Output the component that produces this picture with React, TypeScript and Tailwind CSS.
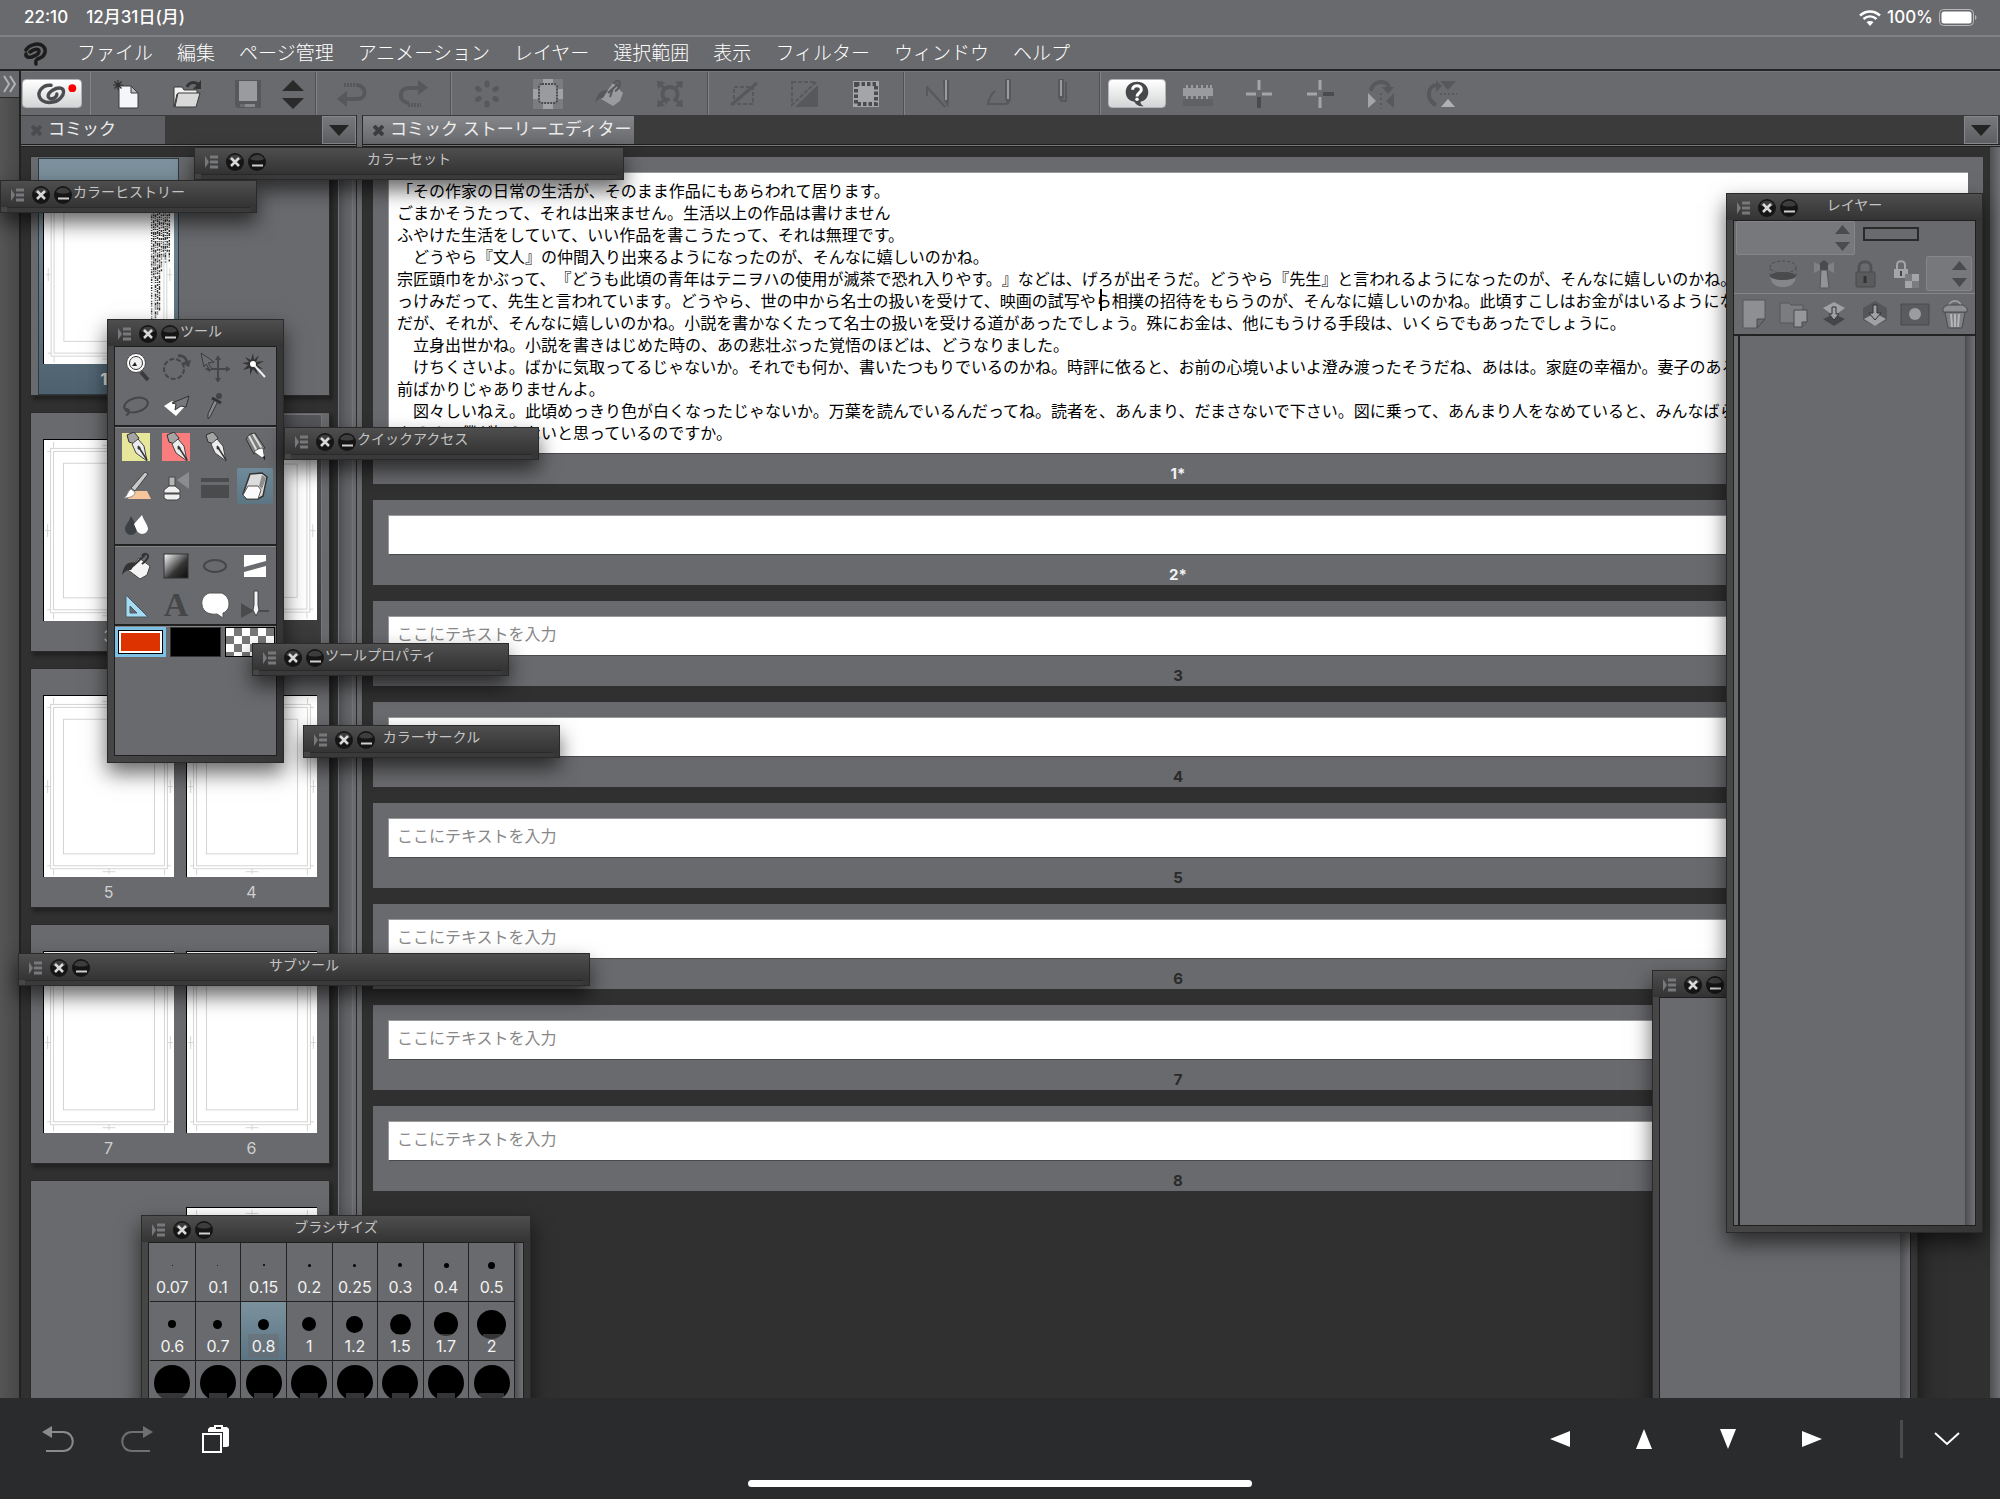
import type { ReactNode } from "react"
import clsx from "clsx"

const MENU = ["ファイル", "編集", "ページ管理", "アニメーション", "レイヤー", "選択範囲", "表示", "フィルター", "ウィンドウ", "ヘルプ"]

const STORY = [
  "「その作家の日常の生活が、そのまま作品にもあらわれて居ります。",
  "ごまかそうたって、それは出来ません。生活以上の作品は書けません",
  "ふやけた生活をしていて、いい作品を書こうたって、それは無理です。",
  "　どうやら『文人』の仲間入り出来るようになったのが、そんなに嬉しいのかね。",
  "宗匠頭巾をかぶって、『どうも此頃の青年はテニヲハの使用が滅茶で恐れ入りやす。』などは、げろが出そうだ。どうやら『先生』と言われるようになったのが、そんなに嬉しいのかね。は",
  "っけみだって、先生と言われています。どうやら、世の中から名士の扱いを受けて、映画の試写やら相撲の招待をもらうのが、そんなに嬉しいのかね。此頃すこしはお金がはいるようになっ",
  "だが、それが、そんなに嬉しいのかね。小説を書かなくたって名士の扱いを受ける道があったでしょう。殊にお金は、他にもうける手段は、いくらでもあったでしょうに。",
  "　立身出世かね。小説を書きはじめた時の、あの悲壮ぶった覚悟のほどは、どうなりました。",
  "　けちくさいよ。ばかに気取ってるじゃないか。それでも何か、書いたつもりでいるのかね。時評に依ると、お前の心境いよいよ澄み渡ったそうだね、あはは。家庭の幸福か。妻子のあるのは",
  "前ばかりじゃありませんよ。",
  "　図々しいねえ。此頃めっきり色が白くなったじゃないか。万葉を読んでいるんだってね。読者を、あんまり、だまさないで下さい。図に乗って、あんまり人をなめていると、みんなばらして",
  "やるぞ。僕が知らないと思っているのですか。",
].join("\n")

const DARK = "#4a4b4d"
const MID = "#57585b"
const PALE = "#9a9b9e"

function Icon({ size = 30, children }: { size?: number; children: ReactNode }) {
  return (
    <svg width={size} height={size} viewBox="0 0 30 30" fill="none" className="shrink-0" aria-hidden="true">
      {children}
    </svg>
  )
}

/* ---------- command bar ---------- */

const icons = {
  newFile: (
    <Icon>
      <path d="M8 7h12l7 7v15H8z" fill="#f4f6f8" stroke="#3a3a3a" />
      <path d="M20 7v7h7z" fill="#b9bcc0" stroke="#3a3a3a" />
      <path d="M7 1v10M2 6h10M3.500 2.500l7 7M10.500 2.500l-7 7" stroke="#2e2e2e" strokeWidth="1.200" />
    </Icon>
  ),
  open: (
    <Icon>
      <path d="M2 8h8l2 3h13v4H5L2 28z" fill="#f2f2f2" stroke="#3a3a3a" />
      <path d="M6 14h22l-4 14H3z" fill="#d9d9d9" stroke="#3a3a3a" />
      <path d="M15 8c2-5 8-6 12-2" stroke="#333" strokeWidth="3" />
      <path d="M29 1v9h-8z" fill="#333" />
    </Icon>
  ),
  save: (
    <Icon>
      <path d="M2 1h26v28H4l-2-2z" fill={MID} />
      <path d="M6 2h18v20H6z" fill={PALE} />
      <path d="M7 25h15v3H7z" fill="#88898c" />
      <path d="M7 25h5v3H7z" fill="#6a6b6e" />
    </Icon>
  ),
  spin: (
    <Icon>
      <path d="M15 1l11 11H4zM15 30l11-11H4z" fill="#2a2a2a" />
    </Icon>
  ),
  undo: (
    <Icon>
      <path d="M7 6h13" stroke={MID} strokeWidth="4" strokeDasharray="2 1" />
      <path d="M20 6c10 1 10 14 0 14H8" stroke={MID} strokeWidth="4" />
      <path d="M10 12v16L0 20z" fill={MID} />
    </Icon>
  ),
  redo: (
    <Icon>
      <path d="M10 26h13" stroke={MID} strokeWidth="4" strokeDasharray="2 1" />
      <path d="M11 24C0 23 0 9 11 9h9" stroke={MID} strokeWidth="4" />
      <path d="M20 1v15l10-7.500z" fill={MID} />
    </Icon>
  ),
  burst: (
    <Icon>
      {[0, 60, 120, 180, 240, 300].map((a) => (
        <ellipse key={a} cx="15" cy="5" rx="2.600" ry="3.500" fill={MID} transform={`rotate(${a} 15 15)`} />
      ))}
    </Icon>
  ),
  cross: (
    <Icon>
      <path d="M0 0h30v30H0z" fill="#7b7c7f" />
      <path d="M10 0h10v30H10zM0 10h30v10H0z" fill="#a1a2a5" />
      <rect x="6" y="5" width="18" height="19" rx="3" fill={PALE} stroke="#4a4b4d" strokeWidth="2" strokeDasharray="2 1" />
    </Icon>
  ),
  fill: (
    <Icon>
      <path d="M19 4l10 10-3 8-7 5L7 20z" fill={PALE} />
      <path d="M14 11C6 11 3 15 1 24c3-4 5-5 8-5z" fill={MID} />
      <path d="M14 14l10-9M20 5c0-4 6-4 6-1s-2 7-5 8M16 18l3-9" stroke={MID} strokeWidth="2" />
    </Icon>
  ),
  expand: (
    <Icon>
      <path d="M2 2l8 1-7 7zM28 2l-8 1 7 7zM2 28l8-1-7-7zM28 28l-8-1 7-7z" fill={MID} />
      <path d="M4 4l6 6M26 4l-6 6M4 26l5-5M26 26l-5-5" stroke={MID} strokeWidth="3" />
      <path d="M11 22c-6-5-4-14 4-14s10 9 4 14" stroke={MID} strokeWidth="4" />
      <path d="M11 18l5 2-6 6z" fill={MID} />
    </Icon>
  ),
  deselect: (
    <Icon>
      <rect x="5" y="8" width="19" height="17" stroke={MID} strokeWidth="2" strokeDasharray="4 2" />
      <path d="M2 26L28 4" stroke={MID} strokeWidth="3" />
    </Icon>
  ),
  invert: (
    <Icon>
      <path d="M2 3h24L2 26z" stroke={MID} strokeWidth="2" strokeDasharray="4 2" />
      <path d="M28 6v22H5z" fill={MID} />
    </Icon>
  ),
  border: (
    <Icon>
      <path d="M2 2h26v26H2z" fill="#a4a5a8" />
      <rect x="5" y="5" width="20" height="20" stroke="#4a4b4d" strokeWidth="4" strokeDasharray="3.500 2" />
    </Icon>
  ),
  rulerSnap: (
    <Icon>
      <path d="M2 7v10M2 8l18 20" stroke={MID} strokeWidth="2" />
      <path d="M18 1h6v20l-1 8-4-8z" fill={MID} />
      <path d="M20 1h2v20h-2z" fill={PALE} />
    </Icon>
  ),
  curveSnap: (
    <Icon>
      <path d="M9 12C4 16 3 20 2 25h18l4-3" stroke={MID} strokeWidth="2" />
      <path d="M19 0h6v20l-3 6-3-6z" fill={MID} />
      <path d="M21 1h2v19h-2z" fill={PALE} />
    </Icon>
  ),
  gridSnap: (
    <Icon>
      <path d="M11 0h6v18l-3 6-3-6z" fill={MID} />
      <path d="M13 1h2v16h-2z" fill={PALE} />
      <path d="M19 3v19h-6" stroke={MID} strokeWidth="2" />
    </Icon>
  ),
  ruler: (
    <Icon>
      <path d="M0 9h30v8H0z" fill={PALE} />
      <path d="M4 6v5M9 6v5M14 6v5M19 6v5M24 6v5M28 6v5M4 15v5M9 15v5M14 15v5M19 15v5M24 15v5" stroke={PALE} strokeWidth="2" />
      <path d="M0 20h30v7H0z" fill="#606164" />
    </Icon>
  ),
  crossA: (
    <Icon>
      <path d="M15 1v10M2 15h10M18 15h10" stroke="#a4a5a8" strokeWidth="3" />
      <path d="M15 18v11" stroke={DARK} strokeWidth="4" />
    </Icon>
  ),
  crossB: (
    <Icon>
      <path d="M15 1v10M15 18v11M2 15h10" stroke="#a4a5a8" strokeWidth="3" />
      <path d="M18 15h11" stroke={DARK} strokeWidth="4" />
    </Icon>
  ),
  flipH: (
    <Icon>
      <path d="M5 12C6 1 22 0 23 9" stroke={MID} strokeWidth="4" />
      <path d="M16 8h12l-6 7z" fill={MID} />
      <path d="M15 14v16" stroke={MID} strokeWidth="2" strokeDasharray="2 3" />
      <path d="M2 14v15l8-7z" fill="#a4a5a8" />
      <path d="M28 14v15l-8-7z" fill={MID} />
    </Icon>
  ),
  flipV: (
    <Icon>
      <path d="M9 26C-2 20 1 6 10 6" stroke={MID} strokeWidth="4" />
      <path d="M9 1v12l6-6z" fill={MID} />
      <path d="M13 15h17" stroke={MID} strokeWidth="2" strokeDasharray="2 2" />
      <path d="M13 2h16l-8 9z" fill={MID} />
      <path d="M14 28h14l-7-8z" fill="#b0b1b4" />
    </Icon>
  ),
}

function BarGroup({ children }: { children: ReactNode }) {
  return <div className="flex h-full items-center border-r border-[#828386] pr-2 pl-1 shadow-[-1px_0_0_#505153_inset]">{children}</div>
}

function BarButton({ label, children }: { label: string; children: ReactNode }) {
  return (
    <button aria-label={label} className="flex h-9 w-[61px] items-center justify-center">
      {children}
    </button>
  )
}

function CommandBar() {
  return (
    <div className="flex h-11 shrink-0 items-center border-t border-[#75767a] bg-[#696a6d]">
      <div className="flex h-full w-[70px] items-center border-r border-[#828386] pl-px">
        <button aria-label="CLIP STUDIO" className="flex h-[29px] w-[60px] items-center justify-center rounded-sm border border-[#b4b4b4] bg-linear-to-b from-white to-[#d4d5d6]">
          <svg width="60" height="28" viewBox="0 0 60 28" fill="none" aria-hidden="true">
            <path
              d="M29 5c-9-1-14 7-12 12 3 8 17 7 22 1 4-4 4-9 0-10-5-1-13 4-13 8 0 5 9 3 9-2"
              stroke="#4c4d51"
              strokeWidth="3.500"
              strokeLinecap="round"
            />
            <circle cx="51" cy="8" r="4" fill="#f00" />
          </svg>
        </button>
      </div>
      <BarGroup>
        <BarButton label="新規">{icons.newFile}</BarButton>
        <BarButton label="開く">{icons.open}</BarButton>
        <BarButton label="保存">{icons.save}</BarButton>
        <button aria-label="前後のページ" className="flex w-[30px] justify-center">{icons.spin}</button>
      </BarGroup>
      <BarGroup>
        <BarButton label="取り消し">{icons.undo}</BarButton>
        <BarButton label="やり直し">{icons.redo}</BarButton>
      </BarGroup>
      <BarGroup>
        <BarButton label="消去">{icons.burst}</BarButton>
        <BarButton label="選択範囲外を消去">{icons.cross}</BarButton>
        <BarButton label="塗りつぶし">{icons.fill}</BarButton>
        <BarButton label="拡大・縮小・回転">{icons.expand}</BarButton>
      </BarGroup>
      <BarGroup>
        <BarButton label="選択を解除">{icons.deselect}</BarButton>
        <BarButton label="選択範囲を反転">{icons.invert}</BarButton>
        <BarButton label="選択範囲の境界線">{icons.border}</BarButton>
      </BarGroup>
      <BarGroup>
        <BarButton label="定規にスナップ">{icons.rulerSnap}</BarButton>
        <BarButton label="特殊定規にスナップ">{icons.curveSnap}</BarButton>
        <BarButton label="グリッドにスナップ">{icons.gridSnap}</BarButton>
      </BarGroup>
      <div className="flex h-full items-center pl-[5px]">
        <BarButton label="サポート">
          <span className="flex h-[29px] w-[58px] items-center justify-center rounded-sm border border-[#b4b4b4] bg-linear-to-b from-white to-[#d4d5d6]">
            <Icon size={26}>
              <path d="M15 1c8 0 13 5 13 12 0 6-4 10-9 11 0 2 1 4 4 5-5 1-9-1-11-5C6 23 2 19 2 13 2 6 7 1 15 1z" fill="#47484b" />
              <path d="M10 10c0-6 10-6 10 0 0 3-5 4-5 8" stroke="#fff" strokeWidth="3.500" />
              <circle cx="15" cy="21" r="2" fill="#fff" />
            </Icon>
          </span>
        </BarButton>
        <BarButton label="ルーラー">{icons.ruler}</BarButton>
        <BarButton label="トンボ">{icons.crossA}</BarButton>
        <BarButton label="基本枠">{icons.crossB}</BarButton>
        <BarButton label="左右反転">{icons.flipH}</BarButton>
        <BarButton label="上下反転">{icons.flipV}</BarButton>
      </div>
    </div>
  )
}

/* ---------- page list ---------- */

function Guides() {
  return (
    <svg viewBox="0 0 131 183" className="absolute inset-0 h-full w-full" fill="none" stroke="#d4d4d4" aria-hidden="true">
      <rect x="6.500" y="8.500" width="118" height="166" />
      <rect x="9.500" y="11.500" width="112" height="160" />
      <rect x="19.500" y="23.500" width="92" height="136" />
      <path d="M9.500 2v6M121.500 2v6M9.500 175v6M121.500 175v6M3 11.500h4M3 171.500h4M124 11.500h4M124 171.500h4" />
      <path d="M59 177.500h13M65.500 174v6M59 5.500h13M65.500 2v6M1 91.500h5M3.500 85v13M125 91.500h5M127.500 85v13" />
    </svg>
  )
}

// vertical columns of tiny handwriting: x, bottom end, dash rhythm
const COLUMNS: [number, number, string][] = [
  [109, 150, "2 1 1 2 1 1"],
  [111, 96, "1 2 3 1 1 1 2 1"],
  [113, 158, "3 1 1 1 1 2"],
  [115, 132, "1 1 2 2 1 1 3 1"],
  [117, 128, "2 1 1 1 4 2"],
  [119, 88, "1 1 1 2 2 1"],
  [121, 74, "2 2 1 1 1 1 3 1"],
  [123, 80, "1 1 3 1 1 2"],
  [125, 68, "2 1 1 1 2 2"],
  [127, 78, "1 2 2 1 3 1"],
]

function Manuscript() {
  return (
    <svg viewBox="0 0 131 183" className="absolute inset-0 h-full w-full" fill="none" stroke="#333" aria-hidden="true">
      {COLUMNS.map(([x, end, dash], i) => (
        <path key={x} d={`M${x} 0V${end}`} strokeDasharray={dash} strokeDashoffset={i * 3} strokeWidth="1.500" />
      ))}
    </svg>
  )
}

function Page({ no, state }: { no?: string; state?: "selected" | "current" }) {
  if (!no) return <div className="w-[141px]" />
  return (
    <div
      className={clsx(
        "flex w-[141px] flex-col items-center pt-[25px]",
        state === "selected" && "border border-[#2f3a40] bg-linear-to-b from-[#7d929e] to-[#4d616e]",
        state === "current" && "border border-[#77787b] bg-linear-to-b from-[#55565a] to-[#393939]",
      )}
    >
      <div className="relative h-[183px] w-[131px] border-t border-l border-black bg-white">
        <Guides />
        {state === "selected" && <Manuscript />}
      </div>
      <span className={clsx("flex h-[30px] items-center text-base", state === "selected" ? "font-bold text-[#e4e4e4]" : "text-[#cfcfcf]")}>{no}</span>
    </div>
  )
}

function Spread({ children }: { children: ReactNode }) {
  return (
    <div className="flex h-60 shrink-0 gap-0.5 border border-[#2a2a2a] bg-[#696a6d] px-[7px] pt-px shadow-[3px_4px_3px_#222]">
      {children}
    </div>
  )
}

function ScrollTrack() {
  return <div className="w-[15px] shrink-0 border-x border-[#747578] bg-linear-to-r from-[#4f5053] via-[#5e5f62] to-[#66676a]" />
}

function DownButton({ label }: { label: string }) {
  return (
    <button aria-label={label} className="flex h-7 w-[34px] items-center justify-center border border-[#86878a] bg-linear-to-b from-[#77787b] to-[#5e5f62]">
      <svg width="20" height="11" viewBox="0 0 20 11" aria-hidden="true">
        <path d="M0 0h20L10 11z" fill="#242424" />
      </svg>
    </button>
  )
}

function Tab({ active, className, children }: { active?: boolean; className?: string; children: ReactNode }) {
  return (
    <button
      className={clsx(
        "flex h-7 items-center gap-1.5 whitespace-nowrap pr-0.5 pl-2.5 text-[17px] text-[#ececec]",
        active ? "bg-linear-to-b from-[#85868a] to-[#696a6d]" : "bg-[#5f6063]",
        className,
      )}
    >
      <svg width="11" height="11" viewBox="0 0 11 11" stroke={active ? "#3c3d3f" : "#4b4c4e"} strokeWidth="4" aria-hidden="true">
        <path d="M1 1l9 9M10 1l-9 9" />
      </svg>
      {children}
    </button>
  )
}

function PageList() {
  return (
    <section className="flex w-[335px] shrink-0 flex-col">
      <div className="flex h-[29px] shrink-0 items-end justify-between bg-[#3b3b3b]">
        <Tab className="w-36">コミック</Tab>
        <DownButton label="タブ一覧" />
      </div>
      <div className="h-[3px] shrink-0 border-y border-[#1e1e1e] bg-[#77787b]" />
      <div className="flex min-h-0 flex-1 bg-[#303030]">
        <div className="flex min-h-0 flex-1 flex-col gap-4 overflow-hidden pt-[9px] pr-2 pl-[9px]">
          <Spread>
            <Page no="1*" state="selected" />
            <Page />
          </Spread>
          <Spread>
            <Page no="3" />
            <Page no="2" state="current" />
          </Spread>
          <Spread>
            <Page no="5" />
            <Page no="4" />
          </Spread>
          <Spread>
            <Page no="7" />
            <Page no="6" />
          </Spread>
          <Spread>
            <Page />
            <Page no="8" />
          </Spread>
        </div>
        <ScrollTrack />
        <div className="w-[3px] bg-[#6a6b6e]" />
      </div>
    </section>
  )
}

/* ---------- story editor ---------- */

function StoryPage({ no, bright, placeholder }: { no: string; bright?: boolean; placeholder?: string }) {
  return (
    <label className="flex shrink-0 flex-col bg-[#696a6d] px-[15px] pt-[15px]">
      <input
        placeholder={placeholder}
        className="h-10 border-t border-b border-l border-t-[#9a9a9a] border-b-[#4a4a4a] border-l-[#9a9a9a] bg-white px-2 pb-1 text-base text-black placeholder:text-[#878787]"
      />
      <span className={clsx("flex h-[30px] items-center justify-center pt-2.5 text-[15px] font-bold", bright ? "text-[#f2f2f2]" : "text-[#2a2a2a]")}>
        {no}
      </span>
    </label>
  )
}

function StoryEditor() {
  return (
    <section className="flex min-w-0 flex-1 flex-col">
      <div className="flex h-[29px] shrink-0 items-end justify-between bg-[#3b3b3b] pr-0.5">
        <Tab active>コミック ストーリーエディター</Tab>
        <DownButton label="タブ一覧" />
      </div>
      <div className="h-[3px] shrink-0 border-y border-[#1e1e1e] bg-[#77787b]" />
      <div className="flex min-h-0 flex-1 bg-[#303030]">
        <div className="flex min-w-0 flex-1 flex-col gap-4 overflow-hidden pt-2.5 pr-[7px] pl-2.5">
          <label className="flex shrink-0 flex-col bg-[#696a6d] px-[15px] pt-[15px]">
            <span className="relative flex flex-col">
              <textarea
                wrap="off"
                defaultValue={STORY}
                className="h-[282px] resize-none overflow-hidden border-t border-b border-l border-t-[#9a9a9a] border-b-[#4a4a4a] border-l-[#9a9a9a] bg-white px-2 pt-[7px] text-base leading-[22px] text-black [text-spacing-trim:space-all]"
              />
              <span className="absolute top-[117px] left-[712px] h-[22px] w-0.5 bg-black" />
            </span>
            <span className="flex h-[30px] items-center justify-center pt-2.5 text-[15px] font-bold text-[#f2f2f2]">1*</span>
          </label>
          <StoryPage no="2*" bright />
          <StoryPage no="3" placeholder="ここにテキストを入力" />
          <StoryPage no="4" placeholder="ここにテキストを入力" />
          <StoryPage no="5" placeholder="ここにテキストを入力" />
          <StoryPage no="6" placeholder="ここにテキストを入力" />
          <StoryPage no="7" placeholder="ここにテキストを入力" />
          <StoryPage no="8" placeholder="ここにテキストを入力" />
        </div>
        <div className="w-2.5 shrink-0 bg-linear-to-r from-[#4f5053] to-[#6f7073]" />
      </div>
    </section>
  )
}

/* ---------- floating palettes ---------- */

function Palette({ title, place, children }: { title?: string; place: string; children?: ReactNode }) {
  return (
    <section className={clsx("absolute flex flex-col border border-[#2a2a2a] bg-linear-to-r from-[#464646] to-[#363636] shadow-[0_10px_20px_rgba(0,0,0,0.6)]", place)}>
      <header className="flex h-[26px] shrink-0 items-center bg-linear-to-b from-[#4e4e4e] to-[#343434]">
        <div className="flex w-[72px] shrink-0 items-center gap-1 pt-0.5 pl-2.5">
          <button aria-label="パレットメニュー" className="mr-1">
            <svg width="13" height="14" viewBox="0 0 13 14" aria-hidden="true">
              <path d="M0 1l4 6-4 6z" fill="#77787b" />
              <path d="M5 2h8M5 7h8M5 12h8" stroke="#77787b" strokeWidth="3" />
            </svg>
          </button>
          <button aria-label="閉じる">
            <svg width="18" height="18" viewBox="0 0 18 18" aria-hidden="true">
              <circle cx="9" cy="9" r="9" fill="#151515" />
              <path d="M2 6a8 8 0 0114 0c-4 2-10 2-14 0z" fill="#3d3d3d" />
              <path d="M5 5l8 8M13 5l-8 8" stroke="#d8d8d8" strokeWidth="2.500" />
            </svg>
          </button>
          <button aria-label="最小化">
            <svg width="18" height="18" viewBox="0 0 18 18" aria-hidden="true">
              <circle cx="9" cy="9" r="9" fill="#151515" />
              <path d="M2 6a8 8 0 0114 0c-4 2-10 2-14 0z" fill="#3d3d3d" />
              <path d="M4 12.500h11" stroke="#d0d0d0" strokeWidth="2" />
            </svg>
          </button>
        </div>
        <h2 className="min-w-0 flex-1 pr-[72px] pb-1 text-center text-sm font-normal whitespace-nowrap text-[#c4c4c4]">{title}</h2>
      </header>
      {children ? (
        <div className="mx-1.5 mb-1.5 flex min-h-0 flex-1 flex-col border border-[#1f1f1f] bg-[#696a6d]">{children}</div>
      ) : (
        <div className="mx-1.5 h-[5px] shrink-0 border-t border-[#2a2a2a] bg-[#3a3a3a]" />
      )}
    </section>
  )
}

const penNib = (
  <>
    <path d="M6 3l7-3 5 6-4 6-6-2z" fill="#a4a4a4" stroke="#333" />
    <path d="M11 12l6-5 6 7 3 15-11-8z" fill="#ececec" stroke="#444" />
    <path d="M17 14l9 14" stroke="#333" strokeWidth="1.500" />
    <circle cx="18" cy="16" r="1.500" fill="#333" />
  </>
)

const tools: { label: string; art: ReactNode; on?: boolean }[][] = [
  [
    {
      label: "虫めがね",
      art: (
        <>
          <path d="M20 20l7 8" stroke="#3b3b3b" strokeWidth="4" />
          <circle cx="15" cy="11" r="9.500" fill="#fff" stroke="#444" />
          <circle cx="15" cy="11" r="6.500" fill="#f0f0f0" stroke="#333" />
          <path d="M11 14h5l-2-4z" fill="#222" />
        </>
      ),
    },
    {
      label: "回転",
      art: (
        <>
          <circle cx="13" cy="17" r="10" stroke="#454648" strokeWidth="2" strokeDasharray="5 2" />
          <path d="M17 4c5-1 8 2 9 6" stroke="#454648" strokeWidth="3" />
          <path d="M20 11l10-3-2 7z" fill="#454648" />
        </>
      ),
    },
    {
      label: "移動",
      art: (
        <>
          <path d="M18 6v22M7 17h22" stroke="#454648" strokeWidth="2" />
          <path d="M18 3l3 5h-6zM18 31l3-5h-6zM31 17l-5 3v-6zM5 17l5 3v-6z" fill="#454648" />
          <path d="M1 1l13 9-6 1 4 6-2 1-4-6-2 3z" fill="#6c6d70" stroke="#3d3e40" />
        </>
      ),
    },
    {
      label: "自動選択",
      art: (
        <>
          <path d="M13 1l1 7 5-5-3 7 8-1-7 4 6 4-7-1 2 7-5-6-3 6v-7l-7 2 5-5-6-2 7-1-4-5 6 3z" fill="#333" />
          <path d="M13 12l12 13" stroke="#eee" strokeWidth="2" />
          <circle cx="13" cy="12" r="3" fill="#fff" />
        </>
      ),
    },
    {
      label: "選択範囲",
      art: (
        <>
          <ellipse cx="15" cy="14" rx="12" ry="7" stroke="#454648" strokeWidth="2" transform="rotate(-14 15 14)" />
          <path d="M5 18c4 0 4 5 0 6" stroke="#454648" strokeWidth="2" />
        </>
      ),
    },
    {
      label: "レイヤー移動",
      art: (
        <>
          <path d="M3 15l8-5 7 4 8-1-11 12z" fill="#fff" />
          <path d="M28 5l-3 11-5-1-6 4 1-6-4-1z" fill="#77787b" stroke="#333" />
        </>
      ),
    },
    {
      label: "スポイト",
      art: (
        <>
          <path d="M18 10l-8 16-2 2v-5l7-15z" fill="#8b8c8e" stroke="#333" />
          <path d="M12 7l9 5" stroke="#333" strokeWidth="3" />
          <circle cx="19" cy="5" r="3" fill="#444" />
        </>
      ),
    },
  ],
  [
    { label: "ペン 黄", art: <><path d="M1 1h28v28H1z" fill="#e6e79b" />{penNib}</> },
    { label: "ペン 赤", art: <><path d="M1 1h28v28H1z" fill="#fb7c7c" />{penNib}</> },
    { label: "ペン", art: penNib },
    {
      label: "鉛筆",
      art: (
        <>
          <path d="M6 7l4-5 5-1 10 15-11 6z" fill="#7d7d7d" stroke="#333" />
          <path d="M9 4l8 15M13 2l9 15" stroke="#ddd" strokeWidth="2" />
          <path d="M14 20c3-3 6-4 9-4l2 12z" fill="#fff" stroke="#555" />
          <path d="M22 25l3-1v4z" fill="#222" />
        </>
      ),
    },
    {
      label: "筆",
      art: (
        <>
          <path d="M10 20h16l4 8H7z" fill="#f7c59c" />
          <path d="M24 1l3 2-13 17-4-3z" fill="#c9c9c9" stroke="#444" />
          <path d="M10 18l4 3c0 4-5 6-11 6 4-2 3-7 7-9z" fill="#fff" stroke="#888" />
        </>
      ),
    },
    {
      label: "エアブラシ",
      art: (
        <>
          <path d="M8 6h6v9H8z" fill="#b5b5b5" stroke="#444" />
          <path d="M3 19l5-4h6l5 4v3H3zM3 23h16v4l-3 2H6l-3-2z" fill="#f0f0f0" stroke="#444" />
          <path d="M16 9l12-8v17z" fill="#8b8c8f" />
        </>
      ),
    },
    { label: "デコレーション", art: <path d="M1 7h28v4H1zM1 14h28v13H1z" fill="#4a4b4c" /> },
    {
      label: "消しゴム",
      on: true,
      art: (
        <>
          <path d="M10 3l12-1 5 4-4 19-5 3H7l-4-5z" fill="#dcdcdc" stroke="#333" strokeWidth="1.500" />
          <path d="M8 15h10l3 4-3 9H7l-4-4z" fill="#fbfbfb" stroke="#555" />
          <path d="M22 4l4 3-4 11-3-3z" fill="#8d8d8d" />
        </>
      ),
    },
    {
      label: "色混ぜ",
      art: (
        <>
          <path d="M10 6c3 6 6 9 6 13a6 6 0 01-12 0c0-4 4-7 6-13z" fill="#3c4145" />
          <path d="M13 14l8-9c2 6 6 10 6 14a6 6 0 01-11 2z" fill="#fff" />
        </>
      ),
    },
  ],
  [
    {
      label: "塗りつぶし",
      art: (
        <>
          <path d="M18 7l11 8-3 9-7 4L7 19z" fill="#f4f4f4" stroke="#444" />
          <path d="M15 12C6 10 3 14 1 24c3-4 5-5 9-5z" fill="#333" />
          <path d="M12 15l12-11M21 5c2-4 7-2 6 1-1 4-4 5-6 7" stroke="#333" strokeWidth="2" />
        </>
      ),
    },
    {
      label: "グラデーション",
      art: (
        <>
          <defs>
            <linearGradient id="grad" x1="0" y1="0" x2="1" y2="1">
              <stop offset="0" stopColor="#fff" />
              <stop offset=".6" stopColor="#333" />
              <stop offset="1" stopColor="#0d0d0d" />
            </linearGradient>
          </defs>
          <rect x="3" y="3" width="24" height="24" fill="url(#grad)" stroke="#333" />
        </>
      ),
    },
    { label: "図形", art: <ellipse cx="15" cy="15" rx="11" ry="6" stroke="#454648" strokeWidth="2" /> },
    {
      label: "コマ枠",
      art: <path d="M4 4h22v6L4 16zM26 15v11H4v-5z" fill="#fff" />,
    },
    {
      label: "定規",
      art: <path fillRule="evenodd" d="M5 5l22 22H5zM9 16v7h7z" fill="#a5dcf5" stroke="#4a5a62" />,
    },
    {
      label: "テキスト",
      art: (
        <text x="15" y="26" textAnchor="middle" fontFamily="Liberation Serif, serif" fontWeight="bold" fontSize="34" fill="#454648">
          A
        </text>
      ),
    },
    {
      label: "フキダシ",
      art: <path d="M9 3h13c5 3 7 6 7 11s-3 8-6 9v5l-6-4c-8 1-14-2-15-9C1 9 4 5 9 3z" fill="#fff" stroke="#555" />,
    },
    {
      label: "線修正",
      art: (
        <>
          <path d="M1 13l13 8-13 7z" fill="#4a4b4c" />
          <path d="M14 21h15" stroke="#4a4b4c" strokeWidth="2" />
          <path d="M14 1h4v14l1 5-3 6-3-6 1-5z" fill="#f4f4f4" stroke="#444" />
        </>
      ),
    },
  ],
]

function ToolPalette() {
  return (
    <Palette title="ツール" place="top-[319px] left-[107px] h-[444px] w-[177px]">
      {tools.map((group, i) => (
        <div key={i} className="grid grid-cols-4 border-b-2 border-[#222] px-px shadow-[0_1px_0_#85868a]">
          {group.map((t) => (
            <button key={t.label} aria-label={t.label} className="flex h-[39px] items-center justify-center">
              <span className={clsx("flex h-9 w-9 items-center justify-center rounded-xs", t.on && "bg-linear-to-b from-[#6f8a99] to-[#5c7583]")}>
                <Icon>{t.art}</Icon>
              </span>
            </button>
          ))}
        </div>
      ))}
      <div className="flex gap-1 pt-px">
        <button aria-label="メインカラー" className="h-[30px] w-[51px] border-3 border-[#7cc0e4] bg-black p-px">
          <span className="block h-full border-2 border-white bg-[#dc3300]" />
        </button>
        <button aria-label="サブカラー" className="h-[30px] w-[51px] border border-[#333] bg-black" />
        <button
          aria-label="透明色"
          className="h-[30px] w-[50px] border border-black bg-white bg-[conic-gradient(#777_25%,#fff_0_50%,#777_0_75%,#fff_0)] bg-size-[16px_16px]"
        />
      </div>
    </Palette>
  )
}

function UpDown() {
  return (
    <svg width="15" height="26" viewBox="0 0 15 26" aria-hidden="true">
      <path d="M0 9h15L7.500 0zM0 17h15l-7.500 9z" fill="#4a4b4d" />
    </svg>
  )
}

const layerToggles: { label: string; art: ReactNode }[] = [
  {
    label: "下のレイヤーでクリッピング",
    art: (
      <>
        <path d="M2 9v8c0 14 26 14 26 0V9" stroke="#55565a" strokeDasharray="3 2" />
        <ellipse cx="15" cy="8" rx="13" ry="6" stroke="#4a4b4d" strokeDasharray="3 2" />
        <path d="M2 17c0 15 26 15 26 0z" fill="#85868a" />
        <ellipse cx="15" cy="17" rx="13" ry="4" fill="#4a4b4d" />
      </>
    ),
  },
  {
    label: "参照レイヤー",
    art: (
      <>
        <path d="M12 11h6l2 18h-9z" fill="#929396" stroke="#55565a" />
        <path d="M5 3l8 4v3l-8 4zM25 3l-8 4v3l8 4z" fill="#808184" />
        <path d="M11 4l4-3 4 3v7h-8z" fill="#4a4b4d" />
      </>
    ),
  },
  {
    label: "レイヤーをロック",
    art: (
      <>
        <path d="M9 14V8c0-7 12-7 12 0v6" stroke="#515254" strokeWidth="3" />
        <rect x="6" y="13" width="19" height="15" rx="1" fill="#5a5b5d" stroke="#4a4b4d" />
        <path d="M15 17v7" stroke="#333" strokeWidth="3" />
      </>
    ),
  },
  {
    label: "透明ピクセルをロック",
    art: (
      <>
        <path d="M6 10V6c0-5 8-5 8 0v4" stroke="#a4a5a8" strokeWidth="2" />
        <path d="M3 10h14v9H3z" fill="#a4a5a8" />
        <path d="M10 12v5" stroke="#444" strokeWidth="2" />
        <path d="M14 15h14v14H14z" fill="#7b7c7f" />
        <path d="M21 15h7v7h-7zM14 22h7v7h-7z" fill="#a4a5a8" />
      </>
    ),
  },
]

const layerActions: { label: string; art: ReactNode }[] = [
  {
    label: "新規レイヤー",
    art: (
      <>
        <path d="M4 1h22v19l-8 9H4z" fill="#8e8f92" stroke="#55565a" />
        <path d="M18 29v-9h8z" fill="#6a6b6e" stroke="#4a4b4d" />
      </>
    ),
  },
  {
    label: "新規フォルダー",
    art: (
      <>
        <path d="M1 4h9l2 2h12v18H1z" fill="#7b7c7f" stroke="#55565a" />
        <path d="M15 11h13v12l-5 5h-8z" fill="#96979a" stroke="#4a4b4d" />
        <path d="M23 28v-5h5" fill="#6a6b6e" stroke="#4a4b4d" />
      </>
    ),
  },
  {
    label: "下のレイヤーに転写",
    art: (
      <>
        <path d="M15 15l11 5-11 7-11-7z" fill="#454648" />
        <path d="M15 3l11 6-11 8L4 9z" fill="#a0a1a4" />
        <path d="M13 8h4v7h3l-5 6-5-6h3z" fill="#a0a1a4" stroke="#333" />
      </>
    ),
  },
  {
    label: "下のレイヤーに結合",
    art: (
      <>
        <path d="M15 2l12 7v12l-12 6-12-6V9z" fill="#55565a" />
        <path d="M15 14l11 6-11 7-11-7z" fill="#a0a1a4" />
        <path d="M13 6h4v8h4l-6 7-6-7h4z" fill="#a0a1a4" stroke="#333" />
      </>
    ),
  },
  {
    label: "マスクを作成",
    art: (
      <>
        <path d="M1 5h28v21H1z" fill="#5a5b5e" stroke="#4a4b4d" />
        <circle cx="15" cy="15" r="6" fill="#9b9c9f" />
      </>
    ),
  },
  {
    label: "レイヤーを削除",
    art: (
      <>
        <path d="M9 8c0-8 12-8 12 0" stroke="#9b9c9f" strokeWidth="2" />
        <path d="M5 13h20l-3 16H8z" fill="#808184" stroke="#4a4b4d" />
        <path d="M11 15l1 13M15 15v13M19 15l-1 13" stroke="#b4b5b8" strokeWidth="2" />
        <path d="M3 9l4-3h16l4 3v4H3z" fill="#8e8f92" stroke="#4a4b4d" />
      </>
    ),
  },
]

function LayerPalette() {
  return (
    <Palette title="レイヤー" place="top-[193px] right-[17px] h-[1040px] w-[257px]">
      <div className="flex gap-2 pl-0.5">
        <button aria-label="合成モード" className="flex h-[34px] w-[119px] items-center justify-end rounded-xs border border-[#85868a] bg-[#77787b] pr-1">
          <UpDown />
        </button>
        <button aria-label="不透明度" className="mt-1.5 h-3.5 w-14 border-2 border-[#2a2a2a]" />
      </div>
      <div className="mt-px flex items-center pl-7">
        {layerToggles.map((t) => (
          <button key={t.label} aria-label={t.label} className="flex w-[41px] justify-center">
            <Icon>{t.art}</Icon>
          </button>
        ))}
        <button aria-label="定規の表示範囲" className="flex h-[35px] w-[46px] items-center justify-end rounded-xs border border-[#85868a] bg-[#77787b] pr-1">
          <UpDown />
        </button>
      </div>
      <div className="mt-0.5 grid h-[43px] grid-cols-6 items-center border-t border-b-2 border-t-[#85868a] border-b-[#222]">
        {layerActions.map((t) => (
          <button key={t.label} aria-label={t.label} className="flex justify-center">
            <Icon>{t.art}</Icon>
          </button>
        ))}
      </div>
      <div className="flex min-h-0 flex-1">
        <div className="w-1.5 border-r-2 border-[#222]" />
        <div className="flex-1" />
        <div className="w-2.5 border-l border-[#4a4b4d] bg-linear-to-r from-[#505154] to-[#707174]" />
      </div>
    </Palette>
  )
}

const brushes = [
  { size: "0.07", px: 1 },
  { size: "0.1", px: 1 },
  { size: "0.15", px: 2 },
  { size: "0.2", px: 3 },
  { size: "0.25", px: 3 },
  { size: "0.3", px: 4 },
  { size: "0.4", px: 5 },
  { size: "0.5", px: 7 },
  { size: "0.6", px: 8 },
  { size: "0.7", px: 9 },
  { size: "0.8", px: 11 },
  { size: "1", px: 14 },
  { size: "1.2", px: 17 },
  { size: "1.5", px: 21 },
  { size: "1.7", px: 24 },
  { size: "2", px: 29 },
  { size: "2.5", px: 36 },
  { size: "3", px: 36 },
  { size: "4", px: 36 },
  { size: "5", px: 36 },
  { size: "6", px: 36 },
  { size: "7", px: 36 },
  { size: "8", px: 36 },
  { size: "10", px: 36 },
]

function BrushSizePalette() {
  return (
    <Palette title="ブラシサイズ" place="top-[1215px] left-[141px] h-[260px] w-[390px]">
      <div className="flex min-h-0 flex-1">
        <div className="grid flex-1 auto-rows-[59px] grid-cols-8 content-start pl-px">
          {brushes.map((b) => (
            <button
              key={b.size}
              className={clsx(
                "relative flex flex-col items-center border-r border-b border-[#222] text-base text-[#f2f2f2]",
                b.size === "0.8" && "bg-linear-to-b from-[#7b929e] to-[#5c7583]",
              )}
            >
              <span className="flex h-11 items-center">
                <span className="rounded-full bg-black" style={{ width: b.px, height: b.px }} />
              </span>
              <span className="absolute bottom-0.5 bg-[#696a6d]/50 px-1 leading-6">{b.size}</span>
            </button>
          ))}
        </div>
        <div className="w-2 bg-linear-to-r from-[#505154] to-[#707174]" />
      </div>
    </Palette>
  )
}

/* ---------- frame ---------- */

function StatusBar() {
  return (
    <div className="flex h-[35px] shrink-0 items-center justify-between bg-[#696a6d] pr-[23px] pl-6 text-[17px] font-medium text-white">
      <div className="flex gap-[18px]">
        <span>22:10</span>
        <span>12月31日(月)</span>
      </div>
      <div className="flex items-center gap-1.5">
        <svg width="22" height="16" viewBox="0 0 22 16" fill="none" stroke="#fff" strokeWidth="2.500" aria-hidden="true">
          <path d="M1 5.500c6-5.500 14-5.500 20 0M4.500 9c4-3.500 9-3.500 13 0" />
          <path d="M11 16l-3.500-4c2-1.500 5-1.500 7 0z" fill="#fff" stroke="none" />
        </svg>
        <span>100%</span>
        <svg width="38" height="18" viewBox="0 0 38 18" fill="none" aria-hidden="true">
          <rect x=".5" y=".5" width="34" height="16" rx="4" stroke="#b8b8ba" />
          <rect x="2.500" y="2.500" width="30" height="12" rx="2.500" fill="#fff" />
          <path d="M36 6c2 1 2 4 0 5z" fill="#b8b8ba" />
        </svg>
      </div>
    </div>
  )
}

function MenuBar() {
  return (
    <nav className="flex h-9 shrink-0 items-center border-t-2 border-b-2 border-t-[#808184] border-b-[#242424] bg-[#696a6d] pt-0.5 pl-[23px]">
      <svg width="25" height="25" viewBox="0 0 25 25" fill="none" className="mr-[29px]" aria-hidden="true">
        <path
          d="M3 8C6 3 15 0 20 4c4 4 2 10-3 12-3 1-5 2-4 6M3 12c-1 4 5 4 8 2 3-1 5-3 5-5 0-3-5-2-9 1"
          stroke="#1c1c1c"
          strokeWidth="3.500"
          strokeLinecap="round"
        />
      </svg>
      <div className="flex gap-6 text-[19px] font-light text-white">
        {MENU.map((m) => (
          <button key={m}>{m}</button>
        ))}
      </div>
    </nav>
  )
}

function EdgeBar() {
  return (
    <footer className="relative z-10 flex h-[101px] shrink-0 flex-col items-center bg-[#2a2b2c]">
      <div className="flex h-[82px] w-full items-center justify-between pr-10 pl-10">
        <div className="flex items-center gap-11">
          <button aria-label="取り消し">
            <svg width="36" height="30" viewBox="0 0 36 30" fill="none" stroke="#8b8b8b" strokeWidth="2" aria-hidden="true">
              <path d="M10 8h13c13 0 13 19 0 19H6" />
              <path d="M12 2v12L2 8z" fill="#8b8b8b" stroke="none" />
            </svg>
          </button>
          <button aria-label="やり直し">
            <svg width="36" height="30" viewBox="0 0 36 30" fill="none" stroke="#707070" strokeWidth="2" aria-hidden="true">
              <path d="M25 8H12C-1 8-1 27 12 27h18" />
              <path d="M23 2v12l10-6z" fill="#707070" stroke="none" />
            </svg>
          </button>
          <button aria-label="コピー">
            <svg width="30" height="30" viewBox="0 0 30 30" aria-hidden="true">
              <path d="M8 5l2-2h4V1h9v2h4l2 2v17l-2 1h-4V8H8z" fill="#fff" />
              <path d="M16 3h5v2h-5z" fill="#2a2b2c" />
              <rect x="3" y="10" width="18" height="18" fill="none" stroke="#fff" strokeWidth="2" />
            </svg>
          </button>
        </div>
        <div className="flex items-center">
          <button aria-label="左" className="flex w-[84px] justify-center">
            <svg width="20" height="16" viewBox="0 0 20 16" aria-hidden="true"><path d="M20 0v16L0 8z" fill="#fff" /></svg>
          </button>
          <button aria-label="上" className="flex w-[84px] justify-center">
            <svg width="16" height="20" viewBox="0 0 16 20" aria-hidden="true"><path d="M0 20h16L8 0z" fill="#fff" /></svg>
          </button>
          <button aria-label="下" className="flex w-[84px] justify-center">
            <svg width="16" height="20" viewBox="0 0 16 20" aria-hidden="true"><path d="M0 0h16L8 20z" fill="#fff" /></svg>
          </button>
          <button aria-label="右" className="flex w-[84px] justify-center">
            <svg width="20" height="16" viewBox="0 0 20 16" aria-hidden="true"><path d="M0 0v16l20-8z" fill="#fff" /></svg>
          </button>
          <span className="mr-[31px] ml-[46px] h-[38px] w-[3px] bg-[#4a4b4c]" />
          <button aria-label="閉じる">
            <svg width="26" height="14" viewBox="0 0 26 14" fill="none" stroke="#fff" strokeWidth="2" aria-hidden="true">
              <path d="M1 1l12 11L25 1" />
            </svg>
          </button>
        </div>
      </div>
      <div className="h-[7px] w-[504px] rounded-full bg-white" />
    </footer>
  )
}

export default function App() {
  return (
    <div className="relative flex h-screen flex-col overflow-hidden bg-[#303030] font-['Inter','Noto_Sans_CJK_JP',sans-serif]" lang="ja">
      <StatusBar />
      <MenuBar />
      <main className="flex min-h-0 flex-1">
        <aside className="w-[21px] shrink-0 border-r-2 border-[#222] bg-linear-to-r from-[#555] to-[#484848]">
          <button aria-label="パレットを展開" className="flex h-[27px] w-full items-center justify-center border-b border-[#2a2a2a] bg-[#66676a]">
            <svg width="14" height="18" viewBox="0 0 14 18" fill="none" stroke="#b0b1b4" strokeWidth="2" aria-hidden="true">
              <path d="M1 1l5 8-5 8M7 1l5 8-5 8" />
            </svg>
          </button>
        </aside>
        <div className="flex min-w-0 flex-1 flex-col">
          <CommandBar />
          <div className="flex min-h-0 flex-1">
            <PageList />
            <div className="w-[7px] shrink-0 border-x border-[#2a2a2a] bg-[#6a6b6e]" />
            <StoryEditor />
          </div>
        </div>
      </main>
      <EdgeBar />

      <Palette title="カラーセット" place="top-[147px] left-[194px] w-[430px]" />
      <Palette title="カラーヒストリー" place="top-[180px] left-0 w-[257px]" />
      <ToolPalette />
      <Palette title="クイックアクセス" place="top-[427px] left-[284px] w-[255px]" />
      <Palette title="ツールプロパティ" place="top-[643px] left-[252px] w-[257px]" />
      <Palette title="カラーサークル" place="top-[725px] left-[303px] w-[257px]" />
      <Palette title="サブツール" place="top-[953px] left-[18px] w-[572px]" />
      <BrushSizePalette />
      <Palette place="top-[970px] right-[82px] h-[500px] w-[266px]">
        <div className="flex flex-1 justify-end">
          <div className="w-2.5 bg-linear-to-r from-[#505154] to-[#707174]" />
        </div>
      </Palette>
      <LayerPalette />
    </div>
  )
}
